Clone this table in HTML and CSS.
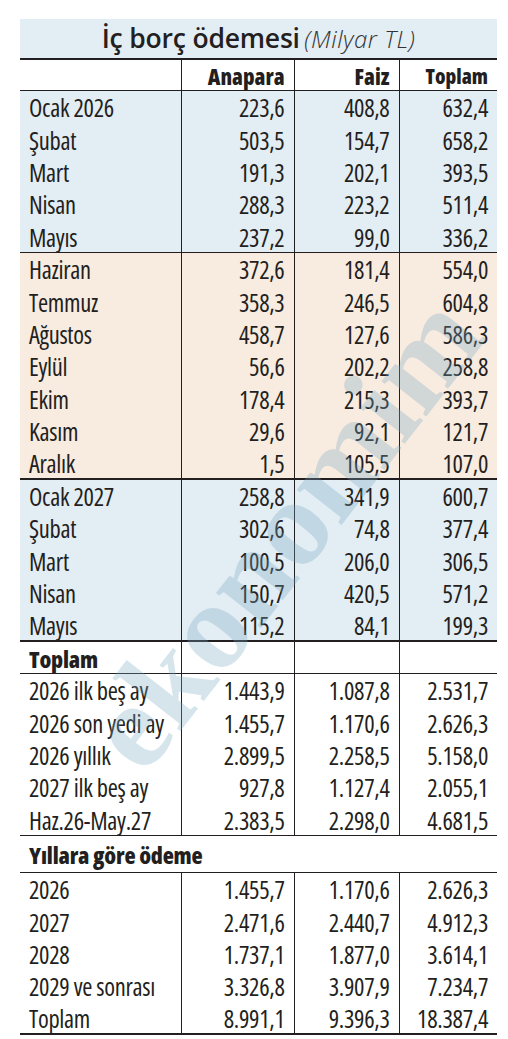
FILE: index.html
```html
<!DOCTYPE html>
<html lang="tr">
<head>
<meta charset="utf-8">
<title>İç borç ödemesi</title>
<link rel="stylesheet" href="styles.css">
</head>
<body>
<div class="page">
  <table class="debt">
    <colgroup>
      <col class="c-label"><col class="c-a"><col class="c-b"><col class="c-c">
    </colgroup>
    <thead>
      <tr class="title-row"><th colspan="4"><span class="t-main">İç borç ödemesi</span> <span class="t-unit">(Milyar TL)</span></th></tr>
      <tr class="head-row"><th></th><th>Anapara</th><th>Faiz</th><th class="h-small">Toplam</th></tr>
    </thead>
    <tbody class="blue">
      <tr><td>Ocak 2026</td><td>223,6</td><td>408,8</td><td>632,4</td></tr>
      <tr><td>Şubat</td><td>503,5</td><td>154,7</td><td>658,2</td></tr>
      <tr><td>Mart</td><td>191,3</td><td>202,1</td><td>393,5</td></tr>
      <tr><td>Nisan</td><td>288,3</td><td>223,2</td><td>511,4</td></tr>
      <tr><td>Mayıs</td><td>237,2</td><td>99,0</td><td>336,2</td></tr>
    </tbody>
    <tbody class="peach">
      <tr><td>Haziran</td><td>372,6</td><td>181,4</td><td>554,0</td></tr>
      <tr><td>Temmuz</td><td>358,3</td><td>246,5</td><td>604,8</td></tr>
      <tr><td>Ağustos</td><td>458,7</td><td>127,6</td><td>586,3</td></tr>
      <tr><td>Eylül</td><td>56,6</td><td>202,2</td><td>258,8</td></tr>
      <tr><td>Ekim</td><td>178,4</td><td>215,3</td><td>393,7</td></tr>
      <tr><td>Kasım</td><td>29,6</td><td>92,1</td><td>121,7</td></tr>
      <tr><td>Aralık</td><td>1,5</td><td>105,5</td><td>107,0</td></tr>
    </tbody>
    <tbody class="blue">
      <tr><td>Ocak 2027</td><td>258,8</td><td>341,9</td><td>600,7</td></tr>
      <tr><td>Şubat</td><td>302,6</td><td>74,8</td><td>377,4</td></tr>
      <tr><td>Mart</td><td>100,5</td><td>206,0</td><td>306,5</td></tr>
      <tr><td>Nisan</td><td>150,7</td><td>420,5</td><td>571,2</td></tr>
      <tr><td>Mayıs</td><td>115,2</td><td>84,1</td><td>199,3</td></tr>
    </tbody>
    <tbody class="totals">
      <tr class="section"><td>Toplam</td><td></td><td></td><td></td></tr>
      <tr class="first"><td>2026 ilk beş ay</td><td>1.443,9</td><td>1.087,8</td><td>2.531,7</td></tr>
      <tr><td>2026 son yedi ay</td><td>1.455,7</td><td>1.170,6</td><td>2.626,3</td></tr>
      <tr><td>2026 yıllık</td><td>2.899,5</td><td>2.258,5</td><td>5.158,0</td></tr>
      <tr><td>2027 ilk beş ay</td><td>927,8</td><td>1.127,4</td><td>2.055,1</td></tr>
      <tr><td>Haz.26-May.27</td><td>2.383,5</td><td>2.298,0</td><td>4.681,5</td></tr>
    </tbody>
    <tbody class="years">
      <tr class="section span"><td colspan="4">Yıllara göre ödeme</td></tr>
      <tr class="first"><td>2026</td><td>1.455,7</td><td>1.170,6</td><td>2.626,3</td></tr>
      <tr><td>2027</td><td>2.471,6</td><td>2.440,7</td><td>4.912,3</td></tr>
      <tr><td>2028</td><td>1.737,1</td><td>1.877,0</td><td>3.614,1</td></tr>
      <tr><td>2029 ve sonrası</td><td>3.326,8</td><td>3.907,9</td><td>7.234,7</td></tr>
      <tr><td>Toplam</td><td>8.991,1</td><td>9.396,3</td><td>18.387,4</td></tr>
    </tbody>
  </table>
  <div class="watermark" aria-hidden="true">ekonomim</div>
</div>
</body>
</html>
```

FILE: styles.css
```css
html, body {
  margin: 0;
  padding: 0;
  background: #ffffff;
}

.page {
  position: relative;
  padding: 19px 0 0 20px;
  width: 477px;
  overflow: hidden;
  height: 1020px;
}

.debt {
  width: 477px;
  border-collapse: collapse;
  table-layout: fixed;
  font-family: "Open Sans", "DejaVu Sans Condensed", sans-serif;
  font-stretch: 75%;
  color: #231f20;
  font-size: 24.5px;
  letter-spacing: -0.3px;
}

.c-label { width: 161px; }
.c-a { width: 113px; }
.c-b { width: 105px; }
.c-c { width: 98px; }

.debt th, .debt td {
  padding: 3px 9px 0 9px;
  white-space: nowrap;
  overflow: visible;
  line-height: 26px;
}

.debt td + td, .debt th + th {
  border-left: 1px solid #231f20;
  text-align: right;
}

.debt td:first-child {
  text-align: left;
}

.title-row th {
  height: 39px;
  background: #e3edf4;
  text-align: center;
  font-weight: normal;
  border-bottom: 2px solid #231f20;
  padding: 0;
  letter-spacing: 0;
  line-height: 36px;
}

.t-main {
  font-size: 26.5px;
  font-weight: 600;
  font-stretch: 100%;
  letter-spacing: -0.2px;
}

.t-unit {
  font-style: italic;
  font-weight: 300;
  font-size: 24px;
  font-stretch: 100%;
  letter-spacing: 0.5px;
  color: #333;
}

.head-row th {
  padding-top: 2px;
  line-height: 28px;
  font-weight: 800;
  font-size: 22px;
  text-align: right;
  border-bottom: 1px solid #231f20;
  background: #fff;
  letter-spacing: 0;
}

.head-row th.h-small {
  font-size: 20.5px;
}

.debt tbody tr {
  height: 32.4px;
}

.debt tbody.blue td {
  background: #e3edf4;
}

.debt tbody.peach td {
  background: #f8ebe0;
}

.debt tbody.peach {
  border-top: 1px solid #231f20;
}

.debt tbody.blue + tbody.totals {
  border-top: 2px solid #231f20;
}

.debt tbody.peach + tbody.blue {
  border-top: 2px solid #231f20;
}

.debt tr.section td {
  font-weight: 800;
  font-size: 23px;
  letter-spacing: -0.2px;
  border-bottom: 1px solid #231f20;
}

.debt tr.span td {
  height: 33px;
}

.debt tbody.years {
  border-top: 1px solid #231f20;
}

.debt tbody.years tr:last-child td {
  border-bottom: 2px solid #231f20;
}

.watermark {
  position: absolute;
  left: 112px;
  top: 690px;
  font-family: "Liberation Serif", serif;
  font-weight: bold;
  font-size: 124px;
  color: rgba(120, 165, 192, 0.3);
  transform: rotate(-52deg);
  transform-origin: left center;
  pointer-events: none;
  white-space: nowrap;
  line-height: 1;
}
```
